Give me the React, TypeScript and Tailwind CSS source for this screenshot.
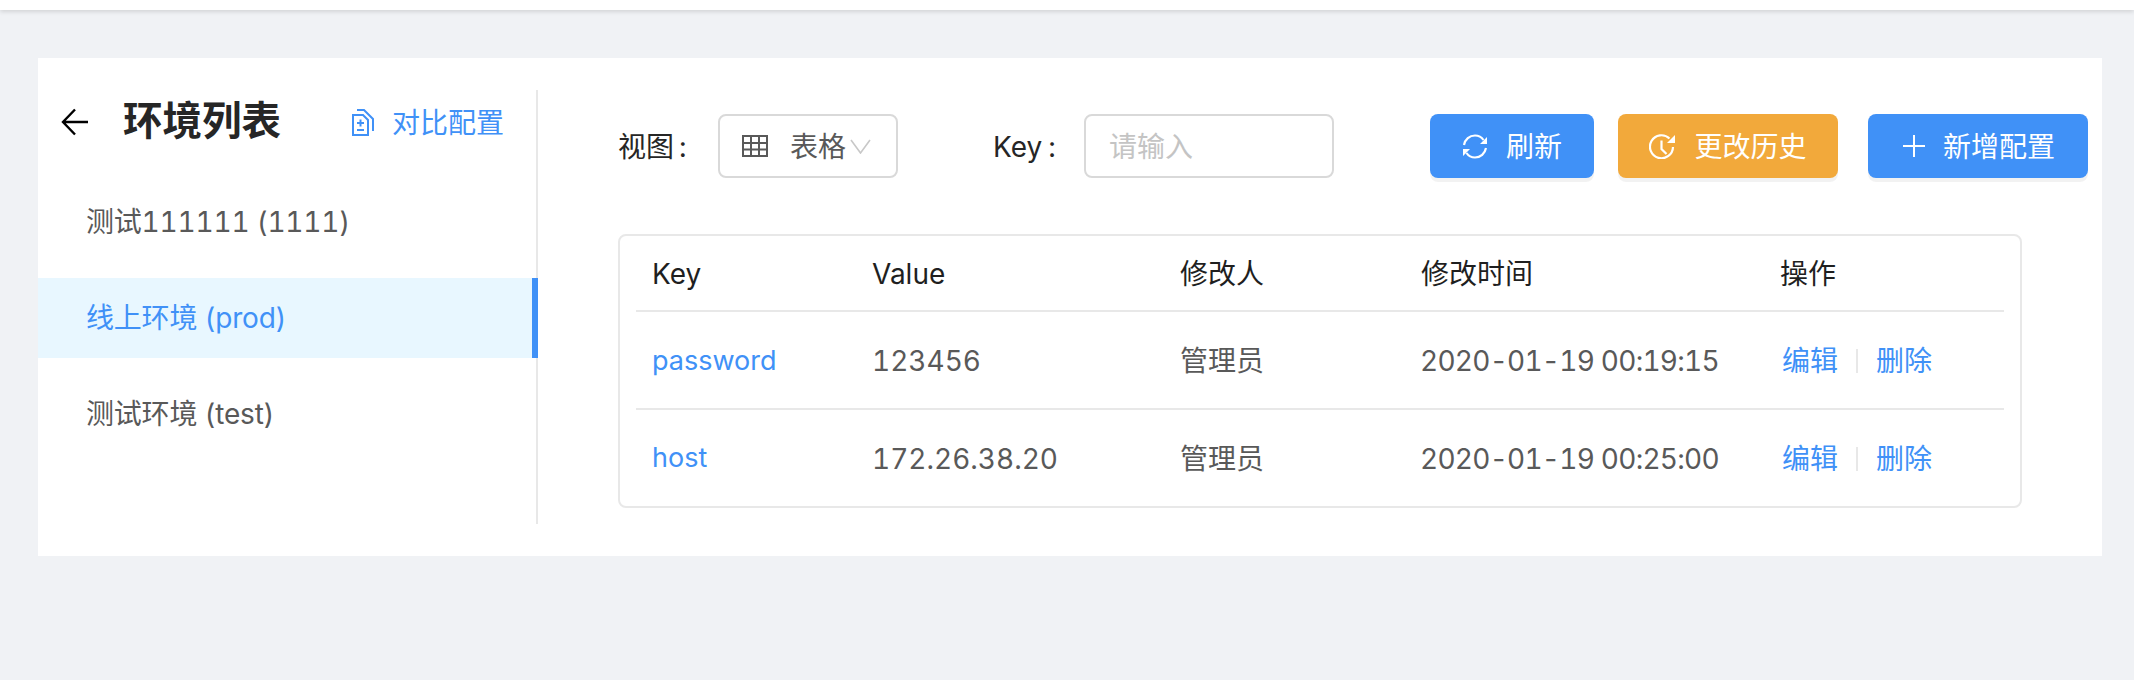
import type { ReactNode } from "react";

const FONT = "font-['Inter','Noto_Sans_CJK_SC',sans-serif]";

const ENVS = [
  { name: "测试111111 (1111)", active: false },
  { name: "线上环境 (prod)", active: true },
  { name: "测试环境 (test)", active: false },
];

const ROWS = [
  { key: "password", value: "123456", user: "管理员", time: "2020-01-19 00:19:15" },
  { key: "host", value: "172.26.38.20", user: "管理员", time: "2020-01-19 00:25:00" },
];

function ArrowLeft() {
  return (
    <svg width="28" height="28" viewBox="0 0 28 28" fill="none" stroke="#000" strokeWidth="2.4">
      <path d="M27 14H2M14 1.500 2 14l12 12.500" />
    </svg>
  );
}

function CompareIcon() {
  return (
    <svg width="22" height="27" viewBox="0 0 22 27" fill="none" stroke="#4091f7" strokeWidth="2">
      <path d="M1 6h10l5 5v15H1z" />
      <path d="M5 1h7l9 9v12" />
      <path d="M5 14h7M8.500 10.500v7M5 21h7" />
    </svg>
  );
}

function TableIcon() {
  return (
    <svg width="26" height="22" viewBox="0 0 26 22" fill="none" stroke="#595959" strokeWidth="2">
      <path d="M1 1h24v20H1zM1 8h24M1 14.500h24M9 1v20M17 1v20" />
    </svg>
  );
}

function Chevron() {
  return (
    <svg width="21" height="15" viewBox="0 0 21 15" fill="none" stroke="#c8c8c8" strokeWidth="1.600">
      <path d="M1 1l9.500 13L20 1" />
    </svg>
  );
}

function RefreshIcon() {
  return (
    <svg width="26" height="25" viewBox="0 0 26 25" fill="none" stroke="#fff" strokeWidth="2.200">
      <path d="M2 11C3 5.500 7.500 1.500 13 1.500c3.500 0 6.500 1.500 8.500 4.500" />
      <path d="M24 14c-1 5.500-5.500 9.500-11 9.500-3.500 0-6.500-1.500-8.500-4.500" />
      <path d="M25 3v7h-7zM1 22v-7h7z" fill="#fff" strokeWidth="0" />
    </svg>
  );
}

function HistoryIcon() {
  return (
    <svg width="27" height="25" viewBox="0 0 27 25" fill="none" stroke="#fff" strokeWidth="2.200">
      <path d="M20.500 4.500A11.500 11.500 0 1 0 24 13" />
      <path d="M12.500 6.500V15l5 5" />
      <path d="M26 1v8h-8z" fill="#fff" strokeWidth="0" />
    </svg>
  );
}

function PlusIcon() {
  return (
    <svg width="22" height="22" viewBox="0 0 22 22" fill="none" stroke="#fff" strokeWidth="2">
      <path d="M11 0v22M0 11h22" />
    </svg>
  );
}

function ActionButton({ icon, label, className }: { icon: ReactNode; label: string; className: string }) {
  return (
    <button className={`flex h-16 items-center justify-center gap-[18px] rounded-lg text-[28px] text-white shadow-[0_4px_0_rgba(0,0,0,0.05)] ${className}`}>
      {icon}
      <span className="pt-[2px]">{label}</span>
    </button>
  );
}

export default function App() {
  return (
    <div className={`h-[680px] bg-[#f0f2f5] tabular-nums ${FONT}`}>
      <div className="h-[10px] bg-white shadow-[0_2px_4px_rgba(0,0,0,0.12)]" />

      <div className="mx-[38px] mt-[48px] flex h-[498px] w-[2064px] bg-white pt-8">
        {/* Env list */}
        <aside className="h-[434px] w-[500px] border-r-2 border-[#e8e8e8]">
          <div className="flex h-[64px] items-center pl-[23px]">
            <ArrowLeft />
            <h1 className="ml-[34px] w-[160px] text-[39.5px] font-bold whitespace-nowrap text-[#262626]">环境列表</h1>
            <a className="ml-[69px] flex items-center gap-[18px] text-[28px] text-[#4091f7]">
              <CompareIcon />
              <span className="pt-[2px]">对比配置</span>
            </a>
          </div>
          <ul className="mt-[28px] flex w-[500px] flex-col gap-4">
            {ENVS.map((env) => (
              <li
                key={env.name}
                className={
                  env.active
                    ? "flex h-20 items-center border-r-[6px] border-[#4091f7] bg-[#e8f7ff] pl-[48px] text-[28px] tracking-[-0.2px] text-[#4091f7]"
                    : "flex h-20 items-center pl-[48px] text-[28px] tracking-[-0.2px] text-[#595959]"
                }
              >
                {env.name}
              </li>
            ))}
          </ul>
        </aside>

        {/* Config panel */}
        <main className="ml-[80px] w-[1470px] pt-6">
          <div className="flex h-16 items-center text-[28px] text-[#262626]">
            <span className="w-[100px] pt-[2px] whitespace-nowrap">
              视图<span className="ml-[5px]">:</span>
            </span>
            <div className="flex h-16 w-[180px] items-center rounded-lg border-2 border-[#d9d9d9] pl-[22px] text-[#595959]">
              <TableIcon />
              <span className="ml-[22px] pt-[2px]">表格</span>
              <span className="ml-[4px]">
                <Chevron />
              </span>
            </div>
            <span className="ml-[95px] w-[91px] pt-[2px] whitespace-nowrap">
              Key<span className="ml-[6px]">:</span>
            </span>
            <div className="flex h-16 w-[250px] items-center rounded-lg border-2 border-[#d9d9d9] pt-[2px] pl-[23px] text-[#c4c4c4]">
              请输入
            </div>
            <ActionButton icon={<RefreshIcon />} label="刷新" className="ml-[96px] w-[164px] bg-[#4091f7]" />
            <ActionButton icon={<HistoryIcon />} label="更改历史" className="ml-6 w-[220px] bg-[#f2a93b]" />
            <ActionButton icon={<PlusIcon />} label="新增配置" className="ml-[30px] w-[220px] bg-[#4091f7] pl-[2px]" />
          </div>

          <div className="mt-14 h-[274px] w-[1404px] rounded-lg border-2 border-[#e8e8e8] px-4">
            <table className="w-[1368px] table-fixed text-left text-[28px]">
              <colgroup>
                <col className="w-[220px]" />
                <col className="w-[308px]" />
                <col className="w-[241px]" />
                <col className="w-[361px]" />
                <col />
              </colgroup>
              <thead>
                <tr className="h-[75px] border-b-2 border-[#e8e8e8] text-[#1f1f1f]">
                  <th className="pt-[2px] pl-4 font-normal">Key</th>
                  <th className="pt-[2px] pl-4 font-normal">Value</th>
                  <th className="pt-[2px] pl-4 font-normal">修改人</th>
                  <th className="pt-[2px] pl-4 font-normal">修改时间</th>
                  <th className="pt-[2px] pl-[14px] font-normal">操作</th>
                </tr>
              </thead>
              <tbody className="text-[#595959]">
                {ROWS.map((row, i) => (
                  <tr key={row.key} className={i === 0 ? "h-[98px] border-b-2 border-[#e8e8e8]" : "h-[96px]"}>
                    <td className="pt-[2px] pl-4 text-[27px] text-[#4091f7]">{row.key}</td>
                    <td className="pt-[2px] pl-4">{row.value}</td>
                    <td className="pt-[2px] pl-4">{row.user}</td>
                    <td className="pt-[2px] pl-[15px] tracking-[-0.75px]">{row.time}</td>
                    <td className="pt-[2px] pl-4 text-[#4091f7]">
                      <span className="flex items-center">
                        编辑
                        <span className="mx-[18px] h-6 w-0.5 bg-[#e8e8e8]" />
                        删除
                      </span>
                    </td>
                  </tr>
                ))}
              </tbody>
            </table>
          </div>
        </main>
      </div>
    </div>
  );
}
